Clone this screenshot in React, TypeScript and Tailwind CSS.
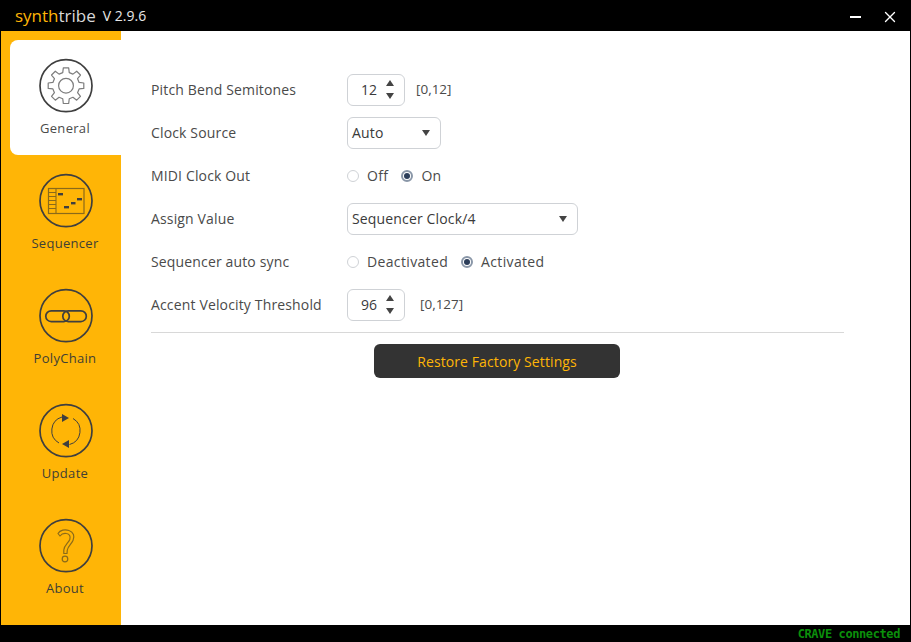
import { ReactNode } from "react";
import { X } from "lucide-react";

const font = { fontFamily: '"Open Sans", "Noto Sans", sans-serif' };

function IconRing({ children }: { children: ReactNode }) {
  return (
    <svg width="56" height="56" viewBox="0 0 56 56" fill="none" className="ml-[1px] block">
      <circle cx="28" cy="27.7" r="26" stroke="#3f3f3f" strokeWidth="1.7" />
      {children}
    </svg>
  );
}

// gear outline, teeth computed once at render
function gearPath() {
  const teeth = 8;
  const pts: string[] = [];
  for (let i = 0; i < teeth; i++) {
    const a = (i / teeth) * Math.PI * 2 - Math.PI / 2;
    const step = Math.PI / teeth;
    const p = (r: number, t: number) =>
      `${(28 + r * Math.cos(t)).toFixed(2)} ${(27.7 + r * Math.sin(t)).toFixed(2)}`;
    pts.push(p(13.5, a - step * 0.62), p(18, a - step * 0.38), p(18, a + step * 0.38), p(13.5, a + step * 0.62));
  }
  return "M" + pts.join("L") + "Z";
}

const navItems = [
  {
    label: "General",
    icon: (
      <IconRing>
        <path d={gearPath()} stroke="#7d7d7d" strokeWidth="1.2" strokeLinejoin="round" />
        <circle cx="28" cy="27.7" r="7.4" stroke="#7d7d7d" strokeWidth="1.2" />
      </IconRing>
    ),
  },
  {
    label: "Sequencer",
    icon: (
      <IconRing>
        <rect x="10.5" y="15.5" width="35.5" height="25" stroke="#8a6a1a" strokeWidth="1.2" />
        <path d="M18 15.5V40.5M10.5 19.5H18M10.5 23.5H18M10.5 27.5H18M10.5 31.5H18M10.5 35.5H18" stroke="#8a6a1a" strokeWidth="1.1" />
        <rect x="20" y="20" width="5" height="2.4" fill="#3f3f3f" />
        <rect x="26" y="33" width="5" height="2.4" fill="#3f3f3f" />
        <rect x="33" y="29" width="4.5" height="2.4" fill="#3f3f3f" />
        <rect x="39" y="25" width="5" height="2.4" fill="#3f3f3f" />
      </IconRing>
    ),
  },
  {
    label: "PolyChain",
    icon: (
      <IconRing>
        <rect x="7.8" y="22.8" width="23.5" height="10.8" rx="5.4" stroke="#3f3f3f" strokeWidth="1.7" />
        <rect x="24.8" y="22.8" width="23.5" height="10.8" rx="5.4" stroke="#3f3f3f" strokeWidth="1.7" />
      </IconRing>
    ),
  },
  {
    label: "Update",
    icon: (
      <IconRing>
        <path d="M24 14A14.2 14.2 0 0 0 21 40" stroke="#3f3f3f" strokeWidth="1" />
        <path d="M35 15.5A14.2 14.2 0 0 1 31.5 41.5" stroke="#3f3f3f" strokeWidth="1" />
        <path d="M24 11V19L31 15Z" fill="#3f3f3f" />
        <path d="M31 37V45L24 41Z" fill="#3f3f3f" />
      </IconRing>
    ),
  },
  {
    label: "About",
    icon: (
      <IconRing>
        <path
          d="M20 15.5C22 12 27 11 31 12.5C35.5 14 37 18.5 35 22.5C33 26.5 30 28 29.3 32L29 35.5H25.8L25.8 32C26.3 27 30.3 25 31.8 21.5C32.8 18.5 31.5 16 28.5 15.5C26 15 23.5 16 22 18Z"
          stroke="#8a6a1a"
          strokeWidth="1.2"
          strokeLinejoin="round"
        />
        <circle cx="27" cy="41" r="2.8" stroke="#8a6a1a" strokeWidth="1.2" />
      </IconRing>
    ),
  },
];

function Triangle({ up = false }: { up?: boolean }) {
  return (
    <svg width="8" height="6" viewBox="0 0 8 6" className="block">
      <path d={up ? "M4 0L8 6H0Z" : "M0 0H8L4 6Z"} fill="#444444" />
    </svg>
  );
}

function Spinner({ value }: { value: string }) {
  return (
    <div className="flex h-[32px] w-[58px] items-center rounded-[6px] border border-[#cfd2d6] bg-white pl-[13px] pr-[10px] text-[14px] text-[#3a3a3a]">
      <span className="w-[18px]">{value}</span>
      <div className="ml-auto flex flex-col gap-[7px]">
        <Triangle up />
        <Triangle />
      </div>
    </div>
  );
}

function Dropdown({ value, width }: { value: string; width: string }) {
  return (
    <div className={`flex h-[32px] items-center justify-between rounded-[6px] border border-[#cfd2d6] bg-white pl-[4px] pr-[10px] text-[14px] tracking-[0.15px] text-[#3a3a3a] ${width}`}>
      <span>{value}</span>
      <Triangle />
    </div>
  );
}

function Radio({ label, checked = false }: { label: string; checked?: boolean }) {
  return (
    <div className="flex items-center gap-[8px]">
      {checked ? (
        <span className="flex h-[12px] w-[12px] items-center justify-center rounded-full border-2 border-[#8a97a8] bg-white">
          <span className="h-[6px] w-[6px] rounded-full bg-[#2c3e5a]" />
        </span>
      ) : (
        <span className="h-[12px] w-[12px] rounded-full border border-[#cfd2d6] bg-white" />
      )}
      <span className="text-[14px] tracking-[0.35px] text-[#4a4a4a]">{label}</span>
    </div>
  );
}

function Row({ label, children }: { label: string; children: ReactNode }) {
  return (
    <div className="flex h-[43px] items-center">
      <div className="w-[196px] pb-[1px] text-[14px] tracking-[0.15px] text-[#4a4a4a]">{label}</div>
      {children}
    </div>
  );
}

export default function App() {
  return (
    <div className="flex h-[642px] w-[911px] flex-col overflow-hidden bg-black" style={font}>
      {/* Title bar */}
      <div className="flex h-[31px] items-center pl-[15px] pr-[12px]">
        <span className="text-[17px] leading-none text-[#ffb506]">synth</span>
        <span className="text-[17px] leading-none text-[#d8d8d8]">tribe</span>
        <span className="ml-[7px] text-[14px] leading-none text-[#e8e8e8]">V 2.9.6</span>
        <div className="ml-auto flex items-center gap-[20px] pt-[2px]">
          <div className="h-[2px] w-[11px] bg-white" />
          <X size={18} strokeWidth={1.8} className="text-white" />
        </div>
      </div>

      {/* Body */}
      <div className="mx-[1px] flex flex-1">
        <nav className="flex w-[120px] flex-col gap-0 bg-[#ffb506] pt-[9px]">
          {navItems.map((item, i) => (
            <div
              key={item.label}
              className={`ml-[9px] flex h-[115px] flex-col items-center pt-[18px] ${
                i === 0 ? "rounded-l-[8px] bg-white" : ""
              }`}
            >
              {item.icon}
              <span className={`mr-[1px] mt-[5px] text-[13px] leading-[18px] tracking-[0.3px] ${i === 0 ? "text-[#4a4a4a]" : "text-[#3f3f35]"}`}>
                {item.label}
              </span>
            </div>
          ))}
        </nav>

        <main className="flex-1 bg-white pl-[30px] pt-[37px]">
          <Row label="Pitch Bend Semitones">
            <Spinner value="12" />
            <span className="ml-[11px] text-[13.5px] text-[#4a4a4a]">[0,12]</span>
          </Row>
          <Row label="Clock Source">
            <Dropdown value="Auto" width="w-[94px]" />
          </Row>
          <Row label="MIDI Clock Out">
            <div className="flex items-center gap-[13px]">
              <Radio label="Off" />
              <Radio label="On" checked />
            </div>
          </Row>
          <Row label="Assign Value">
            <Dropdown value="Sequencer Clock/4" width="w-[231px]" />
          </Row>
          <Row label="Sequencer auto sync">
            <div className="flex items-center gap-[13px]">
              <Radio label="Deactivated" />
              <Radio label="Activated" checked />
            </div>
          </Row>
          <Row label="Accent Velocity Threshold">
            <Spinner value="96" />
            <span className="ml-[15px] text-[13.5px] text-[#4a4a4a]">[0,127]</span>
          </Row>
          <div className="mt-[6px] w-[693px] border-t border-[#d8d8d8]" />
          <button className="ml-[223px] mt-[11px] flex h-[34px] w-[246px] items-center justify-center rounded-[6px] bg-[#333333] text-[14px] tracking-[0.1px] text-[#ffb506]">
            Restore Factory Settings
          </button>
        </main>
      </div>

      {/* Status bar */}
      <div className="flex h-[17px] items-center justify-end pr-[11px]">
        <span className="text-[12px] font-bold leading-none tracking-[-0.4px] text-[#0b8f0b]" style={{ fontFamily: '"DejaVu Sans Mono", monospace' }}>
          CRAVE connected
        </span>
      </div>
    </div>
  );
}
